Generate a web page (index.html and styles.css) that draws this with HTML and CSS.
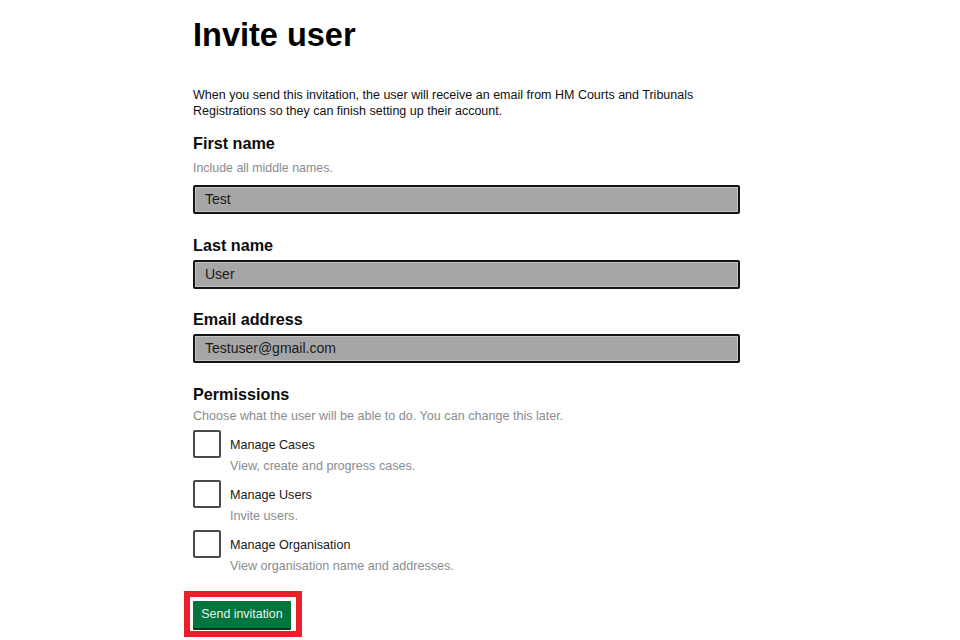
FILE: index.html
```html
<!DOCTYPE html>
<html lang="en">
<head>
<meta charset="utf-8">
<title>Invite user</title>
<link rel="stylesheet" href="styles.css">
</head>
<body>
<main class="page">
  <h1 class="title">Invite user</h1>
  <p class="intro">When you send this invitation, the user will receive an email from HM Courts and Tribunals Registrations so they can finish setting up their account.</p>

  <div class="field">
    <label class="label">First name</label>
    <div class="hint">Include all middle names.</div>
    <div class="input">Test</div>
  </div>

  <div class="field">
    <label class="label">Last name</label>
    <div class="input">User</div>
  </div>

  <div class="field field-close">
    <label class="label">Email address</label>
    <div class="input">Testuser@gmail.com</div>
  </div>

  <div class="field perms">
    <div class="label">Permissions</div>
    <div class="hint hint-tight">Choose what the user will be able to do. You can change this later.</div>
    <div class="checks">
      <div class="check">
        <span class="box"></span>
        <div class="check-text">
          <div class="check-label">Manage Cases</div>
          <div class="check-hint">View, create and progress cases.</div>
        </div>
      </div>
      <div class="check">
        <span class="box"></span>
        <div class="check-text">
          <div class="check-label">Manage Users</div>
          <div class="check-hint">Invite users.</div>
        </div>
      </div>
      <div class="check">
        <span class="box"></span>
        <div class="check-text">
          <div class="check-label">Manage Organisation</div>
          <div class="check-hint">View organisation name and addresses.</div>
        </div>
      </div>
    </div>
  </div>

  <div class="highlight">
    <button class="button" type="button">Send invitation</button>
  </div>
</main>
</body>
</html>
```

FILE: styles.css
```css
html, body {
  margin: 0;
  padding: 0;
  background: #ffffff;
}

body {
  font-family: "Liberation Sans", Arial, sans-serif;
  color: #0b0c0c;
}

.page {
  width: 574px;
  margin: 0 auto;
  padding-top: 17px;
}

.title {
  margin: 0;
  font-size: 32.5px;
  line-height: 36px;
  font-weight: bold;
  color: #000;
}

.intro {
  width: 547px;
  margin: 34px 0 0;
  font-size: 12.5px;
  line-height: 16px;
  color: #111;
}

.field {
  display: flex;
  flex-direction: column;
  margin-top: 21px;
}

.field:first-of-type {
  margin-top: 14px;
}

.field-close {
  margin-top: 20px;
}

.label {
  font-size: 16.2px;
  line-height: 20px;
  font-weight: bold;
  color: #0b0c0c;
  margin-bottom: 5px;
}

.hint {
  font-size: 12.4px;
  line-height: 16px;
  color: #8a8c8e;
  margin-top: 2px;
  margin-bottom: 9px;
}

.hint-tight {
  font-size: 12.6px;
  margin-top: -1px;
  margin-bottom: 6px;
}

.input {
  box-sizing: border-box;
  width: 547px;
  height: 29px;
  border: 2px solid #141414;
  border-radius: 2px;
  background: #a6a6a6;
  box-shadow: inset 0 0 0 1px #c4c4c4;
  font-size: 14px;
  line-height: 25px;
  padding-left: 10px;
  color: #1a1a1a;
}

.checks {
  display: flex;
  flex-direction: column;
  gap: 6px;
}

.check {
  display: flex;
  align-items: flex-start;
  gap: 9px;
}

.box {
  box-sizing: border-box;
  width: 28px;
  height: 28px;
  border: 2px solid #4a4a4a;
  border-radius: 2px;
  background: #fff;
  flex: none;
}

.check-text {
  padding-top: 7px;
  display: flex;
  flex-direction: column;
  gap: 5px;
}

.check-label {
  font-size: 12.6px;
  line-height: 16px;
  color: #1a1a1a;
}

.check-hint {
  font-size: 12.6px;
  line-height: 16px;
  color: #8a8c8e;
}

.highlight {
  align-self: flex-start;
  display: inline-block;
  margin: 17px 0 0 -9px;
  border: 6px solid #e8202a;
  padding: 4px 5px 1px 3px;
}

.button {
  display: block;
  width: 98px;
  height: 27px;
  border: 0;
  border-radius: 1px;
  background: #00753d;
  box-shadow: 0 2px 0 #003a1e;
  color: #e8f3ec;
  font-family: "Liberation Sans", Arial, sans-serif;
  font-size: 12.4px;
  line-height: 27px;
  padding: 0;
  margin-bottom: 2px;
  text-align: center;
}
```
